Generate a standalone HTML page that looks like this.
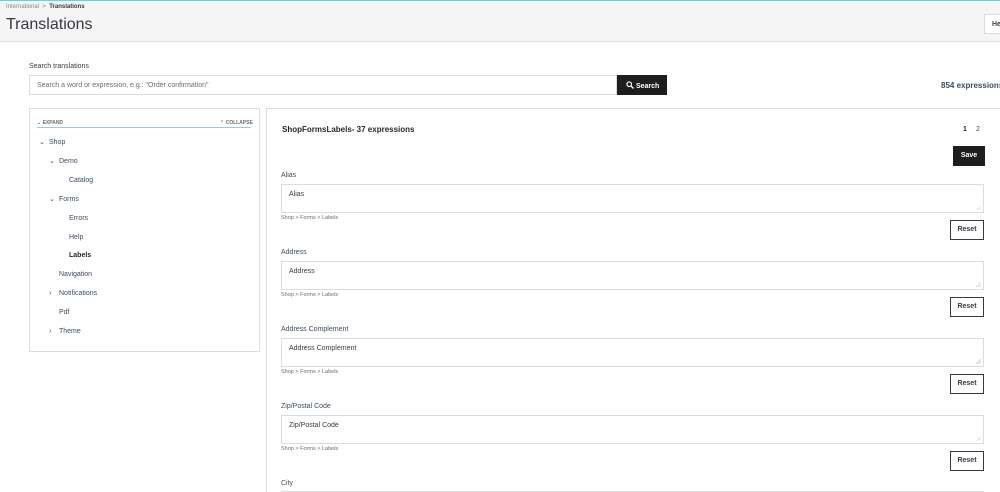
<!DOCTYPE html>
<html style="width:1000px;height:492px;overflow:hidden"><head><meta charset="utf-8"><style>
*{margin:0;padding:0;box-sizing:border-box}
body{width:1000px;height:492px;overflow:hidden;background:#fff;font-family:"Liberation Sans",sans-serif;color:#363a41;position:relative}
.a{position:absolute;white-space:nowrap}
.hdr{left:0;top:0;width:1000px;height:42px;background:#f5f5f5;border-bottom:1px solid #dcdcdc;border-top:1px solid #6ccde6}
.s7{font-size:7px}
.tree{font-size:7px;color:#3c4b63}
.lbl{font-size:7px;color:#3c4b63}
.ta{border:1px solid #dcdcdc;background:#fff;width:703px;height:29px;left:281px}
.bc{font-size:5.5px;color:#6c6c6c;left:281px}
.reset{left:950px;width:34px;height:20px;border:1px solid #363a41;background:#fff;font-size:7px;font-weight:bold;text-align:center;line-height:18px}
.grip{right:2px;bottom:2px;width:5px;height:5px;background:linear-gradient(135deg,transparent 50%,#aaa 50%,transparent 60%,transparent 75%,#aaa 75%,transparent 85%)}
</style></head><body>
<div class="a hdr"></div>
<div class="a s7" style="left:6px;top:4px;font-size:6px;color:#888">International &nbsp;&gt;&nbsp; <b style="color:#363a41">Translations</b></div>
<div class="a" style="left:6px;top:16px;font-size:16px;color:#363a41">Translations</div>
<div class="a" style="left:984px;top:14px;width:30px;height:20px;background:#fff;border:1px solid #dcdcdc;font-size:7px;font-weight:bold;padding:6px 0 0 7px">He</div>

<div class="a s7" style="left:29px;top:63px">Search translations</div>
<div class="a" style="left:29px;top:75px;width:588px;height:20px;border:1px solid #dcdcdc;font-size:7px;color:#6c6c6c;padding:6px 0 0 7px">Search a word or expression, e.g.: "Order confirmation"</div>
<div class="a" style="left:617px;top:75px;width:50px;height:20px;background:#1e1e1e;color:#fff;font-size:7px;font-weight:bold;padding:6px 0 0 9px"><svg width="8" height="8" viewBox="0 0 8 8" style="vertical-align:-1px"><circle cx="3.2" cy="3.2" r="2.3" stroke="#fff" stroke-width="1.1" fill="none"/><path d="M5 5L7.5 7.5" stroke="#fff" stroke-width="1.3"/></svg> Search</div>
<div class="a" style="left:941px;top:81px;font-size:8px;font-weight:bold;color:#3c4b63">854 expressions</div>

<div class="a" style="left:29px;top:108px;width:231px;height:244px;border:1px solid #dcdcdc"></div>
<div class="a" style="left:37px;top:120px;font-size:5px;font-weight:bold;color:#6c6c6c">⌄ EXPAND</div>
<div class="a" style="left:220px;top:120px;font-size:5px;font-weight:bold;color:#6c6c6c">⌃ COLLAPSE</div>
<div class="a" style="left:37px;top:127px;width:214px;height:1px;background:#9fc9d6"></div>
<div class="a tree" style="left:39px;top:138px">⌄</div><div class="a tree" style="left:49px;top:139px">Shop</div>
<div class="a tree" style="left:49px;top:157px">⌄</div><div class="a tree" style="left:59px;top:158px">Demo</div>
<div class="a tree" style="left:69px;top:177px">Catalog</div>
<div class="a tree" style="left:49px;top:195px">⌄</div><div class="a tree" style="left:59px;top:196px">Forms</div>
<div class="a tree" style="left:69px;top:215px">Errors</div>
<div class="a tree" style="left:69px;top:234px">Help</div>
<div class="a tree" style="left:69px;top:252px;font-weight:bold;color:#25282d">Labels</div>
<div class="a tree" style="left:59px;top:271px">Navigation</div>
<div class="a tree" style="left:49px;top:290px">›</div><div class="a tree" style="left:59px;top:290px">Notifications</div>
<div class="a tree" style="left:59px;top:309px">Pdf</div>
<div class="a tree" style="left:49px;top:328px">›</div><div class="a tree" style="left:59px;top:328px">Theme</div>

<div class="a" style="left:266px;top:108px;width:740px;height:400px;border:1px solid #dcdcdc"></div>
<div class="a" style="left:282px;top:125px;font-size:8px;font-weight:bold;color:#25282d">ShopFormsLabels- 37 expressions</div>
<div class="a" style="left:963px;top:126px;font-size:7px;font-weight:bold;color:#25282d">1</div>
<div class="a" style="left:976px;top:126px;font-size:7px;color:#3c4b63">2</div>
<div class="a" style="left:953px;top:146px;width:32px;height:20px;background:#1e1e1e;color:#fff;font-size:7px;font-weight:bold;text-align:center;line-height:20px">Save</div>

<div class="a lbl" style="left:281px;top:172px">Alias</div>
<div class="a ta" style="top:184px"><div class="a s7" style="left:7px;top:6px">Alias</div><div class="a grip"></div></div>
<div class="a bc" style="top:215px">Shop &gt; Forms &gt; Labels</div>
<div class="a reset" style="top:220px">Reset</div>

<div class="a lbl" style="left:281px;top:249px">Address</div>
<div class="a ta" style="top:261px"><div class="a s7" style="left:7px;top:6px">Address</div><div class="a grip"></div></div>
<div class="a bc" style="top:292px">Shop &gt; Forms &gt; Labels</div>
<div class="a reset" style="top:297px">Reset</div>

<div class="a lbl" style="left:281px;top:326px">Address Complement</div>
<div class="a ta" style="top:338px"><div class="a s7" style="left:7px;top:6px">Address Complement</div><div class="a grip"></div></div>
<div class="a bc" style="top:369px">Shop &gt; Forms &gt; Labels</div>
<div class="a reset" style="top:374px">Reset</div>

<div class="a lbl" style="left:281px;top:403px">Zip/Postal Code</div>
<div class="a ta" style="top:415px"><div class="a s7" style="left:7px;top:6px">Zip/Postal Code</div><div class="a grip"></div></div>
<div class="a bc" style="top:446px">Shop &gt; Forms &gt; Labels</div>
<div class="a reset" style="top:451px">Reset</div>

<div class="a lbl" style="left:281px;top:480px">City</div>
<div class="a" style="left:281px;top:491px;width:703px;height:1px;background:#dcdcdc"></div>
</body></html>
